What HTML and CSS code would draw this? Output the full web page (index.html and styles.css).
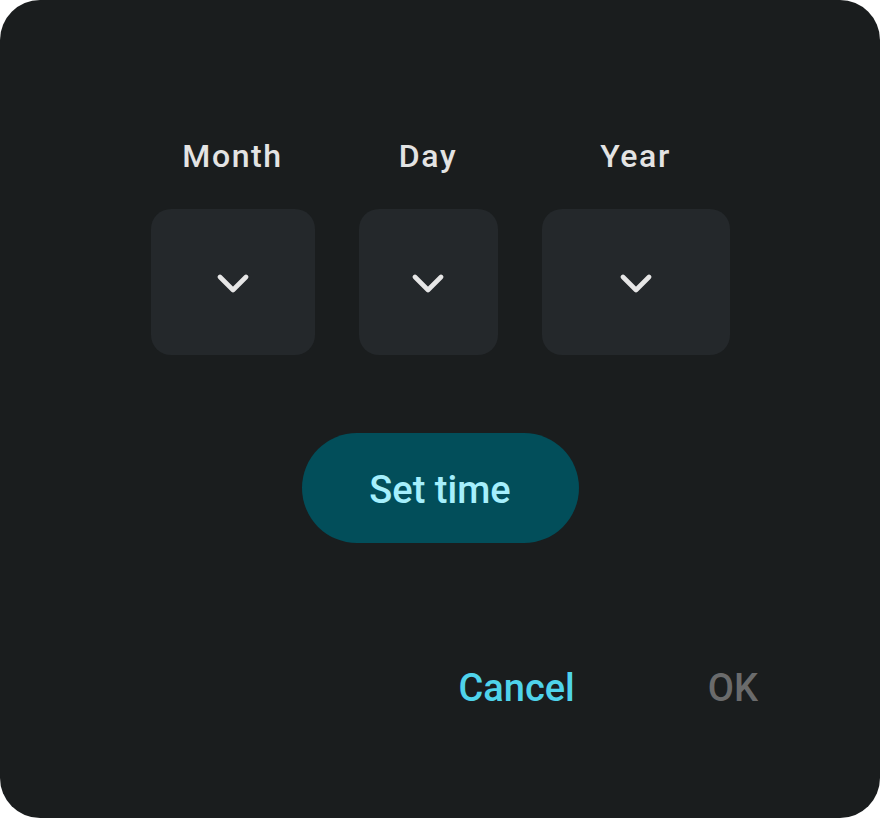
FILE: index.html
```html
<!DOCTYPE html>
<html>
<head>
<meta charset="utf-8">
<link rel="stylesheet" href="styles.css">
</head>
<body>
<div class="dialog">
  <div class="pickers">
    <div class="col">
      <div class="label">Month</div>
      <div class="box box-month">
        <svg class="chev" width="32" height="20" viewBox="0 0 32 20"><polyline points="3,4 16,17 29,4" /></svg>
      </div>
    </div>
    <div class="col">
      <div class="label">Day</div>
      <div class="box box-day">
        <svg class="chev" width="32" height="20" viewBox="0 0 32 20"><polyline points="3,4 16,17 29,4" /></svg>
      </div>
    </div>
    <div class="col">
      <div class="label">Year</div>
      <div class="box box-year">
        <svg class="chev" width="32" height="20" viewBox="0 0 32 20"><polyline points="3,4 16,17 29,4" /></svg>
      </div>
    </div>
  </div>
  <button class="set-time">Set time</button>
  <div class="actions">
    <button class="action cancel">Cancel</button>
    <button class="action ok">OK</button>
  </div>
</div>
</body>
</html>
```

FILE: styles.css
```css
html, body {
  margin: 0;
  padding: 0;
  background: #ffffff;
}
body {
  width: 880px;
  height: 818px;
  font-family: Roboto, "Noto Sans", sans-serif;
}
.dialog {
  box-sizing: border-box;
  width: 880px;
  height: 818px;
  background: #1a1d1e;
  border-radius: 40px;
  display: flex;
  flex-direction: column;
  align-items: center;
  padding-top: 136px;
}
.pickers {
  display: flex;
  gap: 44px;
}
.col {
  display: flex;
  flex-direction: column;
  align-items: center;
  gap: 33px;
}
.label {
  font-size: 32px;
  line-height: 40px;
  font-weight: 500;
  letter-spacing: 1.6px;
  color: #e3e3e3;
}
.box {
  height: 146px;
  background: #24282b;
  border-radius: 20px;
  display: flex;
  align-items: center;
  justify-content: center;
}
.box-month { width: 164px; }
.box-day { width: 139px; }
.box-year { width: 188px; }
.chev {
  display: block;
  margin-top: 2px;
}
.chev polyline {
  fill: none;
  stroke: #e6e6e6;
  stroke-width: 4.6;
  stroke-linecap: round;
  stroke-linejoin: round;
}
.set-time {
  margin-top: 78px;
  width: 277px;
  height: 110px;
  border: none;
  border-radius: 55px;
  background: #024e5a;
  color: #a5effc;
  font-family: Roboto, "Noto Sans", sans-serif;
  font-size: 38px;
  font-weight: 500;
  padding: 0;
  padding-top: 4px;
}
.actions {
  align-self: stretch;
  display: flex;
  justify-content: flex-end;
  margin-top: 121px;
  padding-right: 122px;
  gap: 133px;
}
.action {
  background: none;
  border: none;
  padding: 0;
  font-family: Roboto, "Noto Sans", sans-serif;
  font-size: 38px;
  line-height: 48px;
  font-weight: 500;
}
.cancel { color: #4fd3eb; }
.ok { color: #6a6b6c; }
```
